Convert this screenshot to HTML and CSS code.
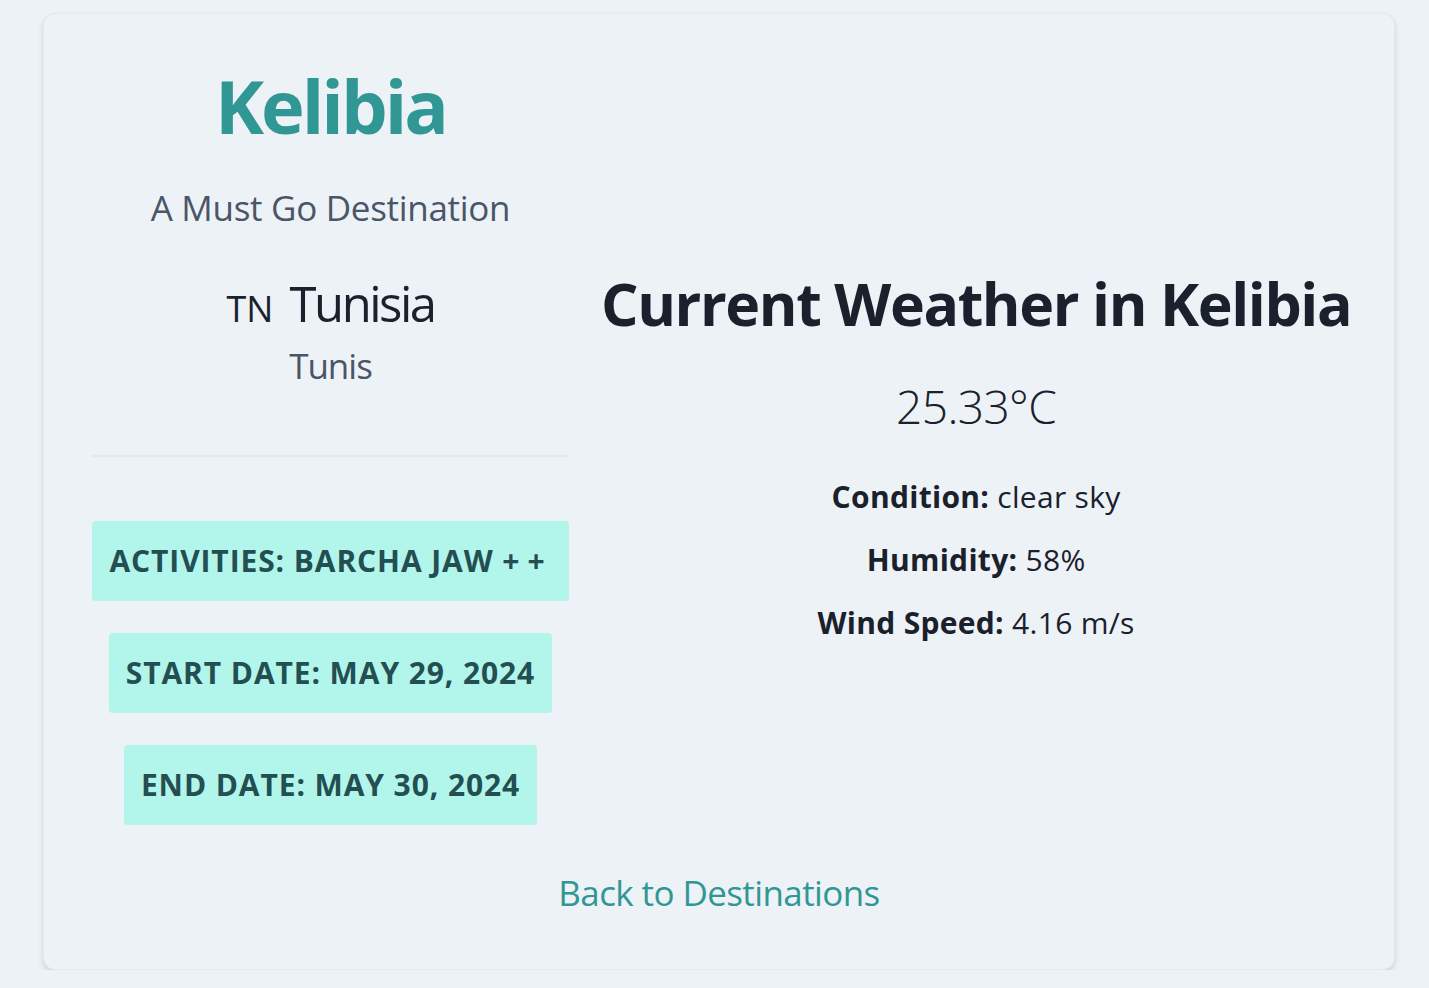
FILE: index.html
```html
<!DOCTYPE html>
<html lang="en">
<head>
<meta charset="utf-8">
<title>Kelibia</title>
<link rel="stylesheet" href="styles.css">
</head>
<body>
<div class="card">
  <div class="grid">
    <div class="left">
      <h1 class="city">Kelibia</h1>
      <p class="tagline">A Must Go Destination</p>
      <div class="country"><span class="flag">TN</span> Tunisia</div>
      <div class="region">Tunis</div>
      <hr class="divider">
      <div class="badges">
        <span class="badge b1">Activities: Barcha jaw <span class="plus">++</span></span>
        <span class="badge b2">Start Date: May 29, 2024</span>
        <span class="badge b3">End Date: May 30, 2024</span>
      </div>
    </div>
    <div class="right">
      <h2 class="wtitle">Current Weather in Kelibia</h2>
      <div class="temp">25.33°C</div>
      <p class="stat"><strong>Condition:</strong> clear sky</p>
      <p class="stat"><strong>Humidity:</strong> 58%</p>
      <p class="stat"><strong>Wind Speed:</strong> 4.16 m/s</p>
    </div>
  </div>
  <div class="back-row"><a class="back" href="#">Back to Destinations</a></div>
</div>
</body>
</html>
```

FILE: styles.css
```css
* { box-sizing: border-box; }
html, body { margin: 0; padding: 0; }
body {
  background: #edf2f7;
  font-family: "Open Sans", "Noto Sans", sans-serif;
  color: #1a202c;
}
.card {
  margin: 13px 0 0 43px;
  width: 1352px;
  padding: 48px 48px 52px;
  background: #edf2f7;
  border: 1px solid #e4e9f1;
  border-radius: 12px;
  box-shadow: 0 4px 6px rgba(30, 40, 70, 0.10), 0 1px 3px rgba(30, 40, 70, 0.06);
}
.grid {
  display: grid;
  grid-template-columns: 477px 1fr;
  column-gap: 32px;
  align-items: center;
}
.left {
  display: flex;
  flex-direction: column;
  align-items: center;
  text-align: center;
}
.city {
  margin: 4px 0 0;
  font-size: 74px;
  line-height: 80px;
  font-weight: 700;
  color: #319795;
  letter-spacing: -3px;
}
.tagline {
  margin: 38px 0 0;
  font-size: 35px;
  line-height: 48px;
  color: #4a5568;
  letter-spacing: -0.3px;
}
.country {
  margin-top: 41px;
  font-size: 49px;
  line-height: 60px;
  color: #1a202c;
  letter-spacing: -2.5px;
}
.flag {
  font-size: 36px;
  font-weight: 500;
  letter-spacing: 0;
  margin-right: 6px;
}
.region {
  margin-top: 5px;
  font-size: 35px;
  line-height: 44px;
  color: #4a5568;
  letter-spacing: -1px;
}
.divider {
  align-self: stretch;
  margin: 67px 0 0;
  border: 0;
  border-top: 2px solid #e3e8ef;
  height: 0;
}
.badges {
  margin-top: 64px;
  display: flex;
  flex-direction: column;
  align-items: center;
}
.badge {
  display: inline-block;
  margin-bottom: 32px;
  padding: 20px 17px;
  font-size: 30px;
  line-height: 40px;
  font-weight: 700;
  text-transform: uppercase;
  color: #234e52;
  background: #b2f5ea;
  border-radius: 4px;
  white-space: nowrap;
  letter-spacing: 0.9px;
}
.plus {
  letter-spacing: 8px;
  margin-right: -1px;
}
.right {
  display: flex;
  flex-direction: column;
  align-items: center;
  text-align: center;
  padding-bottom: 10px;
}
.wtitle {
  margin: 0;
  font-size: 59px;
  line-height: 72px;
  font-weight: 700;
  color: #1a202c;
  letter-spacing: -1.4px;
  white-space: nowrap;
}
.temp {
  margin-top: 37px;
  font-size: 46px;
  line-height: 60px;
  font-weight: 300;
  color: #1a202c;
  letter-spacing: -0.6px;
}
.stat {
  margin: 23px 0 0;
  font-size: 30px;
  line-height: 40px;
  color: #1a202c;
  letter-spacing: 0.3px;
}
.temp + .stat { margin-top: 41px; }
.stat strong { font-weight: 700; }
.back-row {
  margin-top: 12px;
  text-align: center;
}
.back {
  font-size: 35px;
  line-height: 48px;
  color: #319795;
  text-decoration: none;
  letter-spacing: -0.6px;
}
```
